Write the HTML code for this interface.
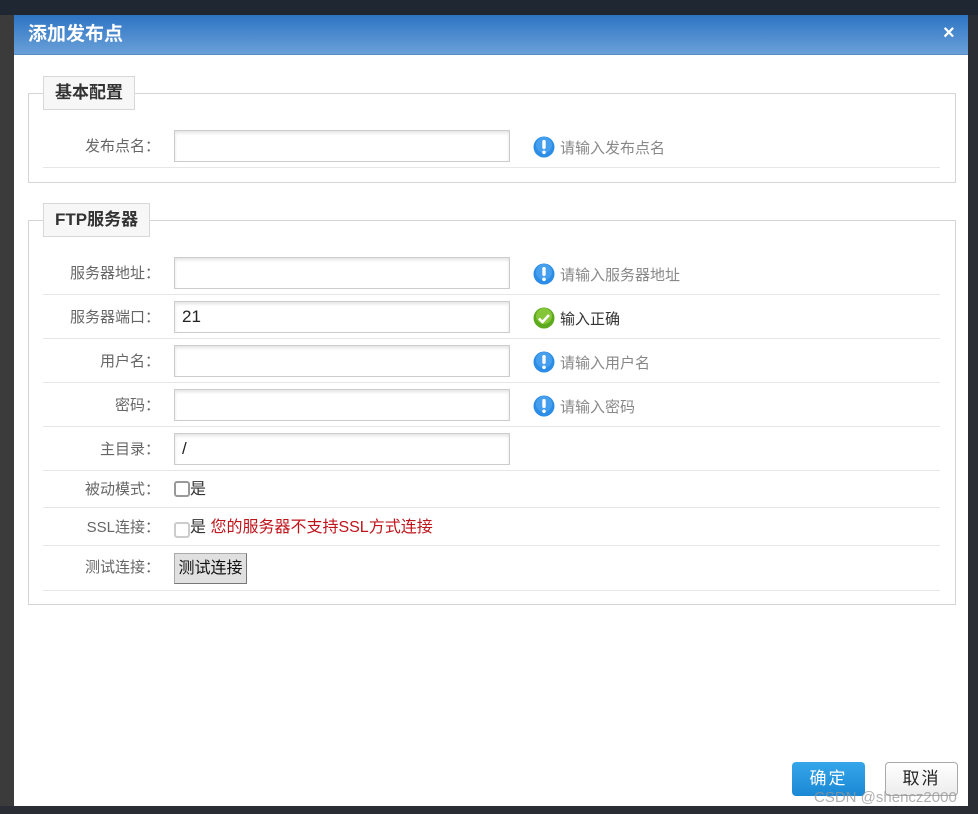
<!DOCTYPE html>
<html><head><meta charset="utf-8"><style>
*{margin:0;padding:0;box-sizing:border-box}
body{width:978px;height:814px;position:relative;overflow:hidden;background:#1f2733;font-family:"Liberation Sans","Noto Sans CJK SC",sans-serif;font-size:15px}
.a{position:absolute}
.lbl{position:absolute;right:818px;color:#666;text-align:right;white-space:nowrap;line-height:20px}
.inp{position:absolute;left:174px;width:336px;height:32px;border:1px solid #ccc;box-shadow:inset 0 2px 3px #e4e4e4;background:#fff;font-size:17px;padding-left:7px;line-height:30px;color:#222}
.sep{position:absolute;left:43px;width:897px;height:1px;background:#e6e6e6}
.hint{position:absolute;left:533px;color:#888;line-height:20px;white-space:nowrap}
.hint svg{vertical-align:-5px;margin-right:5px}
.leg{position:absolute;left:43px;background:#f7f7f7;border:1px solid #d8d8d8;font-weight:bold;font-size:17px;color:#333;padding:0 11px;line-height:32px;height:34px}
.fs{position:absolute;left:28px;width:928px;border:1px solid #d5d5d5}
.cb{display:inline-block;width:16px;height:16px;border:2px solid #999;border-radius:3px;vertical-align:-3px;background:#fff}
</style></head><body>
<div class="a" style="left:0;top:15px;width:14px;height:799px;background:#3b3b3b"></div>
<div class="a" style="left:968px;top:15px;width:10px;height:799px;background:#2a2d33"></div>
<div class="a" style="left:0;top:806px;width:978px;height:8px;background:#2a2d33"></div>
<div class="a" style="left:14px;top:15px;width:954px;height:791px;background:#fff"></div>
<div class="a" style="left:14px;top:15px;width:954px;height:40px;background:linear-gradient(#2d74c4,#6aa0d8);border-bottom:1px solid #5a8cc4"></div>
<div class="a" style="left:28px;top:23px;color:#fff;font-weight:bold;font-size:19px;line-height:24px">添加发布点</div>
<div class="a" style="left:943px;top:21px;color:#fff;font-weight:bold;font-size:20px;line-height:24px">×</div>

<div class="fs" style="top:93px;height:90px"></div>
<div class="leg" style="top:76px">基本配置</div>
<div class="lbl" style="top:137px">发布点名：</div>
<div class="inp" style="top:130px"></div>
<div class="hint" style="top:136px"><svg width="22" height="22" viewBox="0 0 22 22"><circle cx="11" cy="11" r="10.5" fill="#2b8de6"/><circle cx="11" cy="9" r="8" fill="#5fb1f5" opacity=".5"/><rect x="9.3" y="4" width="3.4" height="9" rx="1.5" fill="#fff"/><circle cx="11" cy="16.3" r="1.8" fill="#fff"/></svg>请输入发布点名</div>
<div class="sep" style="top:167px"></div>

<div class="fs" style="top:220px;height:385px"></div>
<div class="leg" style="top:203px">FTP服务器</div>

<div class="lbl" style="top:264px">服务器地址：</div>
<div class="inp" style="top:257px"></div>
<div class="hint" style="top:263px"><svg width="22" height="22" viewBox="0 0 22 22"><circle cx="11" cy="11" r="10.5" fill="#2b8de6"/><circle cx="11" cy="9" r="8" fill="#5fb1f5" opacity=".5"/><rect x="9.3" y="4" width="3.4" height="9" rx="1.5" fill="#fff"/><circle cx="11" cy="16.3" r="1.8" fill="#fff"/></svg>请输入服务器地址</div>
<div class="sep" style="top:294px"></div>

<div class="lbl" style="top:308px">服务器端口：</div>
<div class="inp" style="top:301px">21</div>
<div class="hint" style="top:307px;color:#333"><svg width="22" height="22" viewBox="0 0 22 22"><circle cx="11" cy="11" r="10.5" fill="#5eaa1e"/><circle cx="11" cy="9" r="8" fill="#9fd84a" opacity=".6"/><path d="M6 11.5l3.5 3.5 6.5-7" stroke="#fff" stroke-width="2.6" fill="none"/></svg>输入正确</div>
<div class="sep" style="top:338px"></div>

<div class="lbl" style="top:352px">用户名：</div>
<div class="inp" style="top:345px"></div>
<div class="hint" style="top:351px"><svg width="22" height="22" viewBox="0 0 22 22"><circle cx="11" cy="11" r="10.5" fill="#2b8de6"/><circle cx="11" cy="9" r="8" fill="#5fb1f5" opacity=".5"/><rect x="9.3" y="4" width="3.4" height="9" rx="1.5" fill="#fff"/><circle cx="11" cy="16.3" r="1.8" fill="#fff"/></svg>请输入用户名</div>
<div class="sep" style="top:382px"></div>

<div class="lbl" style="top:396px">密码：</div>
<div class="inp" style="top:389px"></div>
<div class="hint" style="top:395px"><svg width="22" height="22" viewBox="0 0 22 22"><circle cx="11" cy="11" r="10.5" fill="#2b8de6"/><circle cx="11" cy="9" r="8" fill="#5fb1f5" opacity=".5"/><rect x="9.3" y="4" width="3.4" height="9" rx="1.5" fill="#fff"/><circle cx="11" cy="16.3" r="1.8" fill="#fff"/></svg>请输入密码</div>
<div class="sep" style="top:426px"></div>

<div class="lbl" style="top:440px">主目录：</div>
<div class="inp" style="top:433px">/</div>
<div class="sep" style="top:470px"></div>

<div class="lbl" style="top:480px">被动模式：</div>
<div class="a" style="left:174px;top:480px;line-height:20px;color:#333;font-size:16px"><span class="cb"></span>是</div>
<div class="sep" style="top:507px"></div>

<div class="lbl" style="top:518px">SSL连接：</div>
<div class="a" style="left:174px;top:518px;line-height:20px;color:#333;font-size:16px;white-space:nowrap"><span class="cb" style="border-color:#ccc;vertical-align:-6px"></span>是 <span style="color:#c0141b">您的服务器不支持SSL方式连接</span></div>
<div class="sep" style="top:545px"></div>

<div class="lbl" style="top:558px">测试连接：</div>
<div class="a" style="left:174px;top:553px;width:73px;height:31px;background:#e0e0e0;border:1px solid #aaa;border-right-color:#777;border-bottom-color:#777;font-size:16px;line-height:29px;text-align:center;color:#111">测试连接</div>
<div class="sep" style="top:590px"></div>

<div class="a" style="left:792px;top:762px;width:73px;height:34px;background:linear-gradient(#36a6ea,#1a88d4);border-radius:4px;color:#fff;font-size:17px;line-height:34px;text-align:center;letter-spacing:2px">确定</div>
<div class="a" style="left:885px;top:762px;width:73px;height:34px;background:linear-gradient(#fff,#ececec);border:1px solid #aaa;border-radius:4px;color:#222;font-size:17px;line-height:32px;text-align:center;letter-spacing:2px">取消</div>
<div class="a" style="left:814px;top:789px;color:rgba(150,150,150,.75);font-size:15px;line-height:18px">CSDN @shencz2000</div>
</body></html>
